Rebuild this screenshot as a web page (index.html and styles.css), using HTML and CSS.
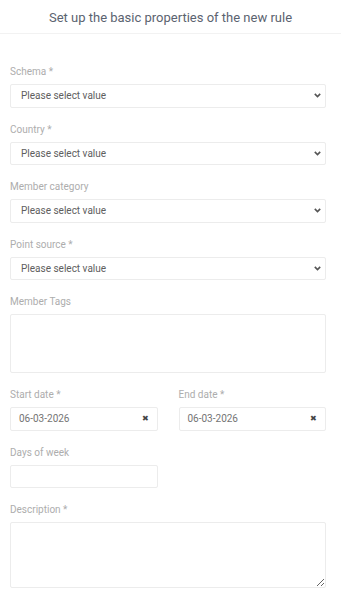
FILE: index.html
```html
<html>
<head>
<title>New rule</title>
<link rel="stylesheet" href="styles.css">
</head>
<body>
<div class="head">Set up the basic properties of the new rule</div>
<form class="ruleForm">
    <div class="field">
        <label>Schema *</label>
        <div class="selWrap">
            <select><option>Please select value</option></select>
            <svg class="chev" width="7" height="5" viewBox="0 0 7 5"><path d="M0.8 0.9 L3.5 3.6 L6.2 0.9" fill="none" stroke="#555" stroke-width="1.6"/></svg>
        </div>
    </div>
    <div class="field">
        <label>Country *</label>
        <div class="selWrap">
            <select><option>Please select value</option></select>
            <svg class="chev" width="7" height="5" viewBox="0 0 7 5"><path d="M0.8 0.9 L3.5 3.6 L6.2 0.9" fill="none" stroke="#555" stroke-width="1.6"/></svg>
        </div>
    </div>
    <div class="field">
        <label>Member category</label>
        <div class="selWrap">
            <select><option>Please select value</option></select>
            <svg class="chev" width="7" height="5" viewBox="0 0 7 5"><path d="M0.8 0.9 L3.5 3.6 L6.2 0.9" fill="none" stroke="#555" stroke-width="1.6"/></svg>
        </div>
    </div>
    <div class="field">
        <label>Point source *</label>
        <div class="selWrap">
            <select><option>Please select value</option></select>
            <svg class="chev" width="7" height="5" viewBox="0 0 7 5"><path d="M0.8 0.9 L3.5 3.6 L6.2 0.9" fill="none" stroke="#555" stroke-width="1.6"/></svg>
        </div>
    </div>
    <div class="field">
        <label>Member Tags</label>
        <div class="box tags"></div>
    </div>
    <div class="row">
        <div class="field">
            <label>Start date *</label>
            <div class="box date"><span>06-03-2026</span><span class="clr">&#10006;</span></div>
        </div>
        <div class="field">
            <label>End date *</label>
            <div class="box date"><span>06-03-2026</span><span class="clr">&#10006;</span></div>
        </div>
    </div>
    <div class="row">
        <div class="field">
            <label>Days of week</label>
            <div class="box"></div>
        </div>
    </div>
    <div class="field">
        <label>Description *</label>
        <textarea></textarea>
    </div>
</form>
</body>
</html>
```

FILE: styles.css
```css
body,form,div,label{margin:0;padding:0;}
body{background:#fff;font-family:Roboto,"Liberation Sans",sans-serif;color:#555;}
.head{height:34px;line-height:35px;text-align:center;font-size:13px;color:#5b6370;border-bottom:1px solid #f2f2f2;box-sizing:border-box;}
.ruleForm{padding:32px 15px 0 10px;}
.field{margin-bottom:16px;}
.field label{display:block;font-size:10px;line-height:12px;color:#adadad;margin-bottom:6px;}
.selWrap{position:relative;}
.selWrap select{display:block;appearance:none;-webkit-appearance:none;width:100%;height:23.5px;border:1px solid #ececec;border-radius:2px;background:#fff;font-family:Roboto,"Liberation Sans",sans-serif;font-size:10px;color:#5e5e5e;padding:0 10px;margin:0;outline:none;}
.chev{position:absolute;right:5px;top:9px;}
.box{height:23.5px;border:1px solid #ececec;border-radius:2px;box-sizing:border-box;background:#fff;}
.tags{height:59px;}
.date{display:flex;align-items:center;justify-content:space-between;padding:0 8px 0 8px;font-size:10px;color:#747474;}
.clr{font-size:8px;color:#444;}
.row{display:grid;grid-template-columns:1fr 1fr;column-gap:21px;}
textarea{display:block;width:100%;height:66px;box-sizing:border-box;border:1px solid #ececec;border-radius:2px;resize:vertical;outline:none;margin:0;}
```
